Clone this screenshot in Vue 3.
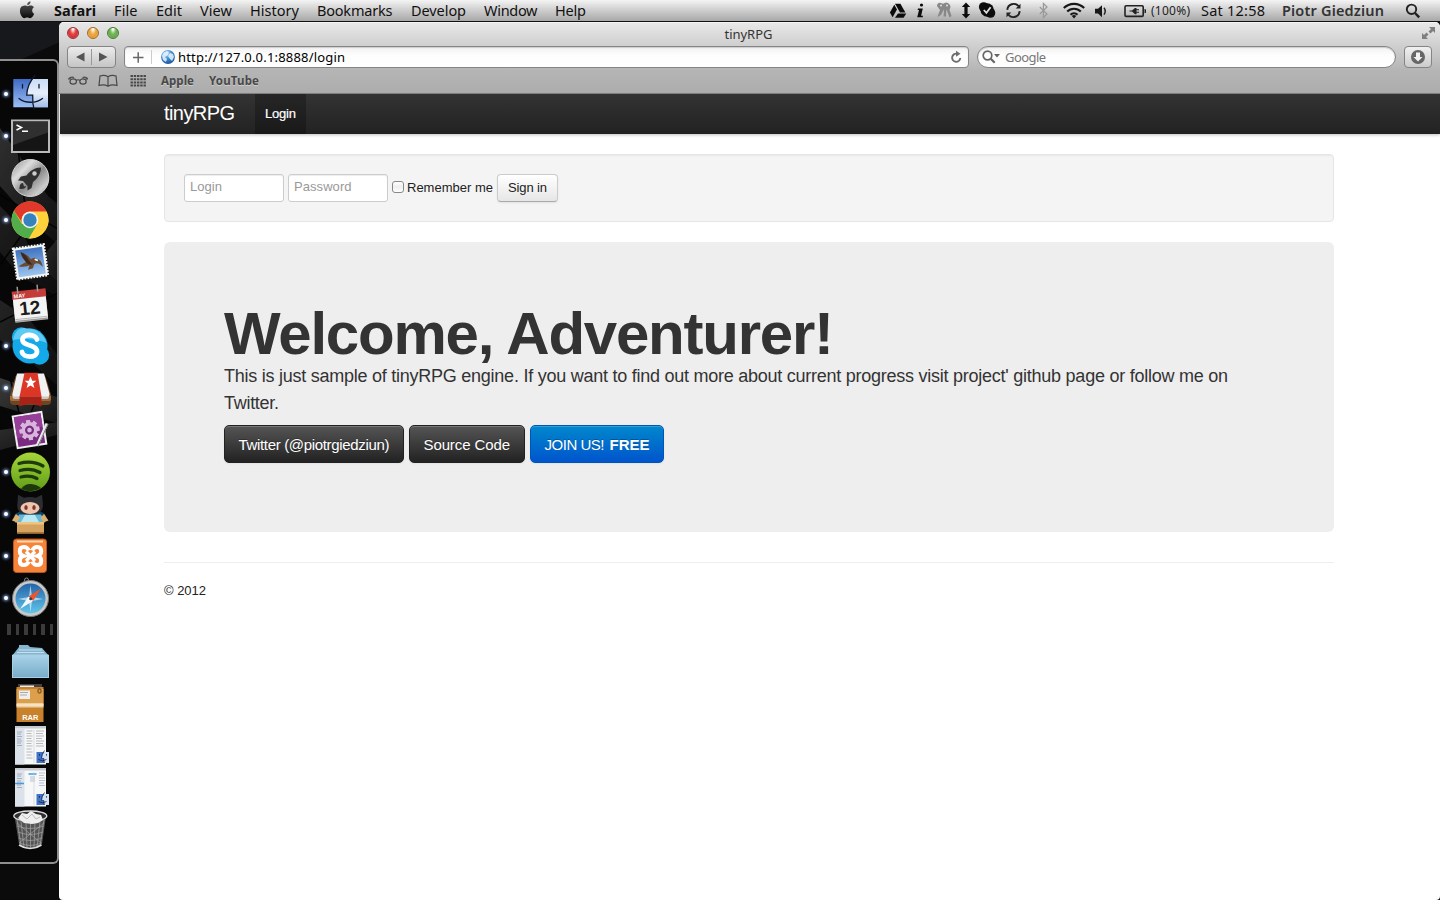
<script setup>
// Tracks a label out (or in) so that it spans the given width.
const vFit = {
  mounted(el, { value }) {
    const n = el.textContent.length
    const natural = el.getBoundingClientRect().width
    const ls = (value - natural) / Math.max(1, n - 1)
    el.style.letterSpacing = ls.toFixed(3) + 'px'
    el.style.marginRight = (-ls).toFixed(3) + 'px'
  },
}

const menus = [
  { t: 'Safari', w: 42, s: 60, b: true },
  { t: 'File', w: 23.5, s: 42 },
  { t: 'Edit', w: 26, s: 44 },
  { t: 'View', w: 32, s: 50 },
  { t: 'History', w: 49, s: 67 },
  { t: 'Bookmarks', w: 75.5, s: 94 },
  { t: 'Develop', w: 55, s: 73 },
  { t: 'Window', w: 53.5, s: 71 },
  { t: 'Help', w: 31, s: 50 },
]
const teeth = [0, 45, 90, 135, 180, 225, 270, 315]
</script>

<template>
  <div class="desktop">
    <header class="menubar">
      <svg class="apple" width="16" height="18" viewBox="0 0 16 18">
        <defs><linearGradient id="ap" x1="0" y1="0" x2="0" y2="1"><stop offset="0" stop-color="#555" /><stop offset=".5" stop-color="#333" /><stop offset="1" stop-color="#080808" /></linearGradient></defs>
        <path fill="url(#ap)" d="M8.2 4.3C8 2.300 9.600.600 11.500.3c.2 2-1.300 3.900-3.300 4zM13.200 9.400c0-1.600.8-2.500 1.800-3.200-.8-1.100-2-1.600-3.300-1.600-1.400 0-2.300.7-3 .7-.8 0-1.800-.7-3-.7C2.900 4.700.9 6.400.9 9.700c0 3.500 2.400 7.500 4.400 7.500 1 0 1.600-.7 2.900-.7 1.200 0 1.700.7 2.800.7 1.800 0 3.500-2.600 4.200-4.500-1.300-.6-2-1.800-2-3.300z" />
      </svg>
      <nav class="menus">
        <div v-for="m in menus" :key="m.t" class="menu" :style="{ width: m.s + 'px' }"><span v-fit="m.w" :class="{ strong: m.b }">{{ m.t }}</span></div>
      </nav>
      <svg class="status" width="265" height="21" viewBox="885 0 265 21">
        <g fill="#0c0c0c">
          <path d="M895 3.800h5.400l5 8.600h-5.400z" /><path d="M894.300 4.800l2.700 4.700-4.400 7.700-2.700-4.700z" /><path d="M898 13.500h8.300l-2.700 4.300h-8.600z" />
          <circle cx="921.500" cy="5" r="1.600" /><path d="M918 8.500h4.800l-1.700 7.300h1.900l-.4 1.500h-5.400l1.800-7.300h-1.400z" />
          <path d="M966 2.500l4.200 4.500h-2.600v7h2.600l-4.200 4.500-4.200-4.500h2.600V7h-2.600z" />
          <circle cx="983.700" cy="7" r="4.800" /><circle cx="990.500" cy="13" r="4.800" /><circle cx="987.200" cy="10" r="6.700" />
        </g>
        <path d="M983.800 10l2.600 2.800 4.200-5.600" fill="none" stroke="#ddd" stroke-width="1.800" />
        <g fill="#888" stroke="none"><path d="M937 6q0-3 3-3.200l3 1 3-1.300q4 .5 4.500 4.500l-1 3 2 6-2 1.500-3-8-.5 7h-2.500l.5-7-3 5.500-3.500 2 2.500-7z" /></g><circle cx="941" cy="5.500" r="1" fill="#ddd" /><circle cx="947" cy="5.500" r="1" fill="#ddd" />
        <g fill="none" stroke="#222" stroke-width="1.900"><path d="M1007.300 9.800a6.400 6.400 0 0 1 11.200-3.700M1019.700 11.200a6.400 6.400 0 0 1-11.200 3.700" /></g>
        <path fill="#222" d="M1020.500 3.700v4.800h-4.800zM1006.500 17.300v-4.800h4.800z" />
        <path d="M1039.800 7l7.200 7-3.600 3.500v-14l3.600 3.500-7.200 7" fill="none" stroke="#999" stroke-width="1.200" />
        <g fill="none" stroke="#181818" stroke-width="2.100"><path d="M1063.800 8.100a14.400 14.400 0 0 1 20.400 0" /><path d="M1067.200 11.500a9.600 9.600 0 0 1 13.600 0" /><path d="M1070.500 14.800a5 5 0 0 1 7 0" /></g>
        <path fill="#181818" d="M1071.800 15.900q2.200-1.600 4.400 0L1074 18.500z" />
        <path fill="#181818" d="M1095 8.800h3l4-3.600v12l-4-3.600h-3z" /><path d="M1104 7.800q2.500 3.400 0 6.800" fill="none" stroke="#222" stroke-width="1.500" />
        <path d="M1142 5.800h-15.800q-1.200 0-1.200 1.200v8.200q0 1.200 1.200 1.200H1142q1.200 0 1.200-1.200V7q0-1.200-1.200-1.200z" fill="none" stroke="#222" stroke-width="1.600" />
        <path fill="#222" d="M1144.500 9l1.500.4v3.400l-1.500.4zM1129.500 10.500h2.500l3-2.600h1.500v1.400h2.500v1h-2.500v1.400h2.500v1h-2.500v1.500H1135l-3-2.600h-2.500z" />
      </svg>
      <div class="battery"><span v-fit="39">(100%)</span></div>
      <div class="clock"><span v-fit="64">Sat 12:58</span></div>
      <div class="user"><span v-fit="102">Piotr Giedziun</span></div>
      <svg class="spot" width="16" height="16" viewBox="0 0 16 16"><circle cx="6.500" cy="6.300" r="4.700" fill="none" stroke="#222" stroke-width="1.900" /><path d="M10 10l4.200 4.300" stroke="#222" stroke-width="2.500" /></svg>
    </header>

    <div class="workspace">
      <aside class="side">
        <svg class="wallpaper" width="60" height="878" viewBox="0 22 60 878">
          <defs><linearGradient id="wl" x1="0" y1="0" x2="1" y2="1"><stop offset="0" stop-color="#888" /><stop offset="1" stop-color="#2a2a2a" /></linearGradient></defs>
          <path fill="#0b0b0c" d="M0 22h60v878H0z" /><path fill="#17181b" d="M0 22h60v20L22 59H0z" />
          <g fill="url(#wl)" opacity=".65"><path d="M0 128l18 26 30 42 12 10v40L32 222 0 186z" opacity=".7" /><path d="M0 206l20 20 14 32L60 282v16l-40-22-20-24z" opacity=".4" /><path d="M60 236v48L38 262z" opacity=".7" /><path d="M0 300l30 20 30 38v30L22 354 0 340z" opacity=".5" /><path d="M0 378l60 20v26L0 406z" opacity=".9" /><path d="M0 430l60-8v12L0 450z" opacity=".7" /></g>
          <path d="M0 195l60 35M18 150l8 64M0 265l40-55M0 322l60-30M10 378l12 46M40 390l-12 30" stroke="#050505" stroke-width="1.500" />
        </svg>
        <div class="dock">
          <div class="tile on"><svg viewBox="0 0 40 40">
            <defs><linearGradient id="fd" x1="0" y1="0" x2="0" y2="1"><stop offset="0" stop-color="#3f6ac4" /><stop offset="1" stop-color="#9dbff4" /></linearGradient><linearGradient id="fl" x1="0" y1="0" x2="0" y2="1"><stop offset="0" stop-color="#c9dcf5" /><stop offset=".5" stop-color="#e6eefb" /><stop offset="1" stop-color="#a2bee9" /></linearGradient></defs>
            <path fill="url(#fd)" d="M3.300 5H38v28.300H3.300z" /><path fill="url(#fl)" d="M23 5h15v28.300H23.700c-.5-3-1-6-.8-12h-6C17 16 19 9 23 5z" />
            <path d="M25 1.500C19 8 17 15 16.700 21.200h6c-.2 5 0 9 1.300 14M9 24.500c6 5 17 5 23.500 0M12.500 10.500V14M29 10.500V14" fill="none" stroke="#111a2b" stroke-width="1.300" stroke-linecap="round" />
          </svg></div>
          <div class="tile on"><svg viewBox="0 0 40 40">
            <path d="M2 4.500h37v31.500H2z" fill="#151515" stroke="#b9b9b9" stroke-width="2" /><path d="M3 5.500h35v11L3 29z" fill="#303030" /><path d="M6.500 9l5 2.500-5 2.500M12 15.300h6" fill="none" stroke="#fff" stroke-width="1.500" />
          </svg></div>
          <div class="tile"><svg viewBox="0 0 40 40">
            <defs><linearGradient id="lp" x1="0" y1="0" x2="1" y2="1"><stop offset="0" stop-color="#888" /><stop offset=".3" stop-color="#ddd" /><stop offset=".55" stop-color="#8b8b8b" /><stop offset=".8" stop-color="#ccc" /><stop offset="1" stop-color="#777" /></linearGradient></defs>
            <circle cx="20.300" cy="20" r="18.500" fill="url(#lp)" stroke="#d8d8d8" />
            <path fill="#303030" d="M31 9.500c-6 0-11 3-14.500 8l-5.500 1-3 4 5 .5 4.500 5 0 4.500 4-2.500 1.500-6C28 20.500 31 15 31 9.500zM13 25c-3 0-3.500 3-3.500 6 3 0 6 0 6.500-3l-2 .5z" /><circle cx="24.500" cy="15.500" r="2.200" fill="#ccc" />
          </svg></div>
          <div class="tile on"><svg viewBox="0 0 40 40">
            <circle cx="20" cy="20" r="18.500" fill="#ffd23b" /><path fill="#51ad4c" d="M4 10.800a18.500 18.500 0 0 0 15 27.600l8.300-14.200L12 24z" /><path fill="#ffd23b" d="M36.500 11.500H20l7.500 12.700L19 38.400A18.500 18.500 0 0 0 36.500 11.500z" /><path d="M4 10.800A18.500 18.500 0 0 1 36.500 11.500H20a8.500 8.500 0 0 0-8 11z" fill="#e0392b" />
            <circle cx="20" cy="20" r="8.300" fill="#f4f4f4" /><circle cx="20" cy="20" r="6.700" fill="#3682bd" />
          </svg></div>
          <div class="tile"><svg viewBox="0 0 40 40">
            <defs><linearGradient id="ml" x1="0" y1="0" x2="0" y2="1"><stop offset="0" stop-color="#3f73bf" /><stop offset="1" stop-color="#9bc4ee" /></linearGradient></defs>
            <g transform="rotate(-8 20 20)"><path d="M5 4.500h31v31H5z" fill="#f5f5f5" stroke="#f5f5f5" stroke-width="2.400" stroke-dasharray="1.800 1.200" /><path fill="url(#ml)" d="M7 6.500h27v27H7z" /><path fill="#6a4a30" d="M12 9c3 1 7 4 9 8l4-.5 3 2c2 0 4 3 4 8-3-4-5-5-8-4l-2 4-5 1 2-4c-6 1-8 0-11-1l8-3c-2-3-4-6-4-10.500z" /><path fill="#3a291e" d="M12 9c3 1 6 5 7 9l3 5-4-1c-3-3-5-8-6-13z" /><path d="M25 18l3 1.500" stroke="#fff" stroke-width="1.600" /></g>
          </svg></div>
          <div class="tile"><svg viewBox="0 0 40 40">
            <g transform="rotate(-6 20 20)"><path fill="#bbb" d="M3.500 8h33v29h-33z" /><path fill="#f4f4f4" d="M3.500 13h33v22h-33z" /><path fill="#c43c3a" d="M3 6h34v8H3z" /><path d="M9 1.500v7M29 1.500v7" stroke="#999" stroke-width="1.500" /><text x="4.500" y="12.800" font-size="5.500" font-weight="700" fill="#fff">MAY</text><text x="19.500" y="30.500" font-size="19" font-weight="700" text-anchor="middle" fill="#1b1b1b">12</text><path d="M4 34h32M4 36h32" stroke="#777" stroke-width=".5" /></g>
          </svg></div>
          <div class="tile on"><svg viewBox="0 0 40 40">
            <g fill="#14a9e8"><circle cx="20" cy="20" r="17.500" /><circle cx="11.500" cy="11" r="9.700" /><circle cx="29.500" cy="29" r="9.700" /></g><path d="M3 14C5 3 12 1 16 2.500c9-1 18 5 20.500 14.500-8-4-24-5-33.500-3z" fill="#5ccaf5" />
            <path d="M27 13.500c-1-5.500-14-6.500-14.500 0-.5 7 14.500 4.500 14.500 12 0 7-14 6.500-15 .5" fill="none" stroke="#fff" stroke-width="4.800" stroke-linecap="round" />
          </svg></div>
          <div class="tile on"><svg viewBox="0 0 40 40">
            <path fill="#6f4423" d="M5 10q0-3 3-3h24q3 0 4 3l5 17v6q0 4-4 4H4q-4 0-4-4v-6z" /><path fill="#a56c38" d="M0 28h41v3q0 2-3 2H3q-3 0-3-2z" /><path fill="#c9c9c9" d="M2.500 26h36.500v3q0 2-3 2H5q-2.500 0-2.500-2z" /><path fill="#f1f1f1" d="M7 5.500h27l5.500 20q.5 3-2 3H4.500q-2.500 0-2-3z" /><path fill="#dc3627" d="M14.500 4.700h13l4 24h-22z" /><path fill="#a92218" d="M9.500 28.500h22v10l-6-2-5-1-5 1-6 2z" /><path fill="#fff" d="M20.500 8.500l1.700 4.200h4.100l-3.200 2.900 1.300 4.400-3.900-2.600-3.900 2.600 1.300-4.400-3.200-2.900h4.100z" />
          </svg></div>
          <div class="tile"><svg viewBox="0 0 40 40">
            <g transform="rotate(-9 20 20)"><path d="M5 4h29v32H5z" fill="#7a2a80" stroke="#eee" stroke-width="2" /><path fill="#963f99" d="M6 5h27v13L6 27z" /><g fill="#d7b5dc"><rect v-for="a in teeth" :key="a" x="17.500" y="10" width="4" height="20" :transform="`rotate(${a} 19.500 20)`" /><circle cx="19.500" cy="20" r="8" /></g><circle cx="19.500" cy="20" r="4.500" fill="#7a2a80" /><circle cx="19.500" cy="20" r="2.300" fill="#d7b5dc" /></g><path d="M37 13.500L27 36" stroke="#e8e8e8" stroke-width="3" /><path d="M38 14L28 36" stroke="#777" />
          </svg></div>
          <div class="tile on"><svg viewBox="0 0 40 40">
            <defs><linearGradient id="sp" x1="0" y1="0" x2="0" y2="1"><stop offset="0" stop-color="#a6d53a" /><stop offset="1" stop-color="#5e9d17" /></linearGradient></defs>
            <circle cx="20.500" cy="20" r="19.500" fill="url(#sp)" /><path d="M9 11.500c9-2.500 17-1.500 24 2.500M10 18.500c7-2 14-1.500 20 2M11 25c6-1.500 11-1 16 1.500" fill="none" stroke="#1e3b0b" stroke-width="3.200" stroke-linecap="round" /><path d="M11 37q4-5.500 10-5t10 4q-9 6-20 1z" fill="#1d380c" />
          </svg></div>
          <div class="tile on"><svg viewBox="0 0 40 40">
            <ellipse cx="20" cy="23" rx="16" ry="7" fill="#155d85" opacity=".7" /><path fill="#2b2d31" d="M8 .8l6 3q6-1.500 12 0l6-3 .8 8c1 9-4 12-13 12S6 17 7.500 9z" /><ellipse cx="20" cy="14" rx="9.500" ry="6" fill="#efc5ad" /><ellipse cx="16" cy="13.500" rx="1.700" ry="2.600" fill="#7b3a2e" /><ellipse cx="24" cy="13.500" rx="1.700" ry="2.600" fill="#7b3a2e" /><path fill="#66b7d8" d="M9 20.500h22l4 8H5z" /><path fill="#b9e8f5" d="M15 21h10l4 7H11z" />
            <path fill="#d6a260" d="M7 28h27v11.500H7z" /><path fill="#f0c37f" d="M7 28h27v2.500H7z" /><path fill="#dfb06d" d="M6 20l-4 6.500 5 2 3-5zM34 20l4.500 6.500-5 2-3-5z" /><path fill="#a97637" d="M7 38h27v1.500H7z" />
          </svg></div>
          <div class="tile on"><svg viewBox="0 0 40 40">
            <rect x="3.500" y="3" width="33" height="33.500" rx="3" fill="#f5833a" stroke="#b95516" /><path d="M7 5.500h26" stroke="#ffd3ae" stroke-width="2" /><path fill="#fff" d="M17 19h7v2.500h-7z" />
            <g fill="none" stroke="#fff" stroke-width="4"><path d="M18.800 14.500q-1.500-3.500-5-3.500-4 0-4 4.300 0 3.500 3.500 4.700-3.500 1-3.500 4.700 0 4.300 4 4.300 3.500 0 5-3.500M22.200 14.500q1.500-3.500 5-3.500 4 0 4 4.300 0 3.500-3.500 4.700 3.500 1 3.500 4.700 0 4.300-4 4.300-3.500 0-5-3.500" /><path d="M16 15.500l9 9.500M25 15.500L16 25" stroke-width="3.300" /></g>
          </svg></div>
          <div class="tile on"><svg viewBox="0 0 40 40">
            <defs><linearGradient id="sf" x1="0" y1="0" x2="0" y2="1"><stop offset="0" stop-color="#225ea4" /><stop offset="1" stop-color="#64cbee" /></linearGradient></defs>
            <circle cx="16.500" cy="2" r="2" fill="none" stroke="#888" /><circle cx="20.500" cy="20.500" r="16.500" fill="url(#sf)" stroke="#c9c9c9" stroke-width="3" /><circle cx="20.500" cy="20.500" r="18" fill="none" stroke="#777" /><path fill="#eaf7ff" opacity=".65" d="M20.500 7l1.500 12 11 2-11 2-1.500 11-1.500-11-11-2 11-2z" /><path fill="#f0552a" d="M31 10.500l-8 12.500-4.500-4.500z" /><path fill="#f5f8fa" d="M10 31l8.500-12.500L23 23z" /><circle cx="20.700" cy="20.700" r="1.500" fill="#345" />
          </svg></div>
          <div class="divider"><i v-for="n in 6" :key="n" /></div>
          <div class="tile"><svg viewBox="0 0 40 40">
            <defs><linearGradient id="fo" x1="0" y1="0" x2="0" y2="1"><stop offset="0" stop-color="#a9d3e8" /><stop offset="1" stop-color="#78acc9" /></linearGradient></defs>
            <path fill="#86b5cf" d="M2 15l7-9V4h9l2 2 12 1 7 8v22H2z" /><path d="M9 9h23M7 11.500h27" stroke="#c5e0ed" /><path d="M2.500 14h36v22.500h-36z" fill="url(#fo)" stroke="#a8cfe3" />
          </svg></div>
          <div class="tile"><svg viewBox="0 0 40 40">
            <path fill="#424244" d="M8 1h24v6H8z" /><path fill="#eee" d="M10 2.500h14V7H10z" /><path fill="#c9822c" d="M6.500 4h27v35h-27z" /><path fill="#dca04c" d="M6.500 6h27v14h-27z" /><path fill="#edd0a0" d="M6.500 20h27v4.500h-27z" /><path d="M6.500 22h27" stroke="#f8e8cc" stroke-width="1.500" /><path fill="#eee" d="M9 7.500h11V16H9z" /><path d="M10 9.500h8M10 12h7" stroke="#aaa" /><rect x="28" y="6" width="3" height="4" rx="1" fill="none" stroke="#664016" /><text x="20.300" y="36.500" font-size="7.500" font-weight="700" text-anchor="middle" fill="#fff">RAR</text>
          </svg></div>
          <div v-for="k in 2" :key="k" class="tile"><svg viewBox="0 0 40 40">
            <path fill="#f6f7f8" d="M5 1h31v38.500H5z" /><path fill="#c7cbd0" d="M5 1h31v2.500H5z" /><path fill="#dbe2ea" d="M5 3.500h9.500v36H5z" />
            <path d="M7 7h5M7 9h4M7 11.500h5M7 14h4M7 16h5M7 18h4M7 20.500h5" stroke="#94a2b4" stroke-width=".8" />
            <path v-if="k === 1" d="M16.500 6h6M16.500 8.500h5M16.500 11h6M16.500 13.500h5M16.500 16h6M16.500 18.500h5M16.500 21h6M16.500 24h5M16.500 27h6M16.500 30h5M16.500 33h6M26 6h8M26 8.500h7M26 11h8M26 13.500h6M26 16h8M26 18.500h7M26 21h8" stroke="#aaa" stroke-width=".8" />
            <g v-else><path d="M5 16.500h9M18.500 7h8" stroke="#459be0" stroke-width="1.400" /><path d="M20 10h5M20 12h5M20 14h5M29 6h6M29 8.500h5M29 11h6M29 13.500h6M29 16h5M29 18.500h6" stroke="#aab4c4" stroke-width=".8" /></g>
            <path d="M24 5v33" stroke="#ccc" stroke-width=".6" /><path fill="#3f74c8" d="M26.500 27H39v11H26.500z" /><path fill="#d3e2f6" d="M34 27h5v11h-4.700l-.5-4h-2.300q.2-4 2.500-7z" /><path d="M34.500 25.500q-3 4-3 8h2.300l.5 4.500M28.500 34.500q4 2.500 8 0M29.500 29v1.700M36.500 29v1.700" fill="none" stroke="#112" stroke-width=".7" />
          </svg></div>
          <div class="tile"><svg viewBox="0 0 40 40">
            <path fill="#555" d="M4.500 7h31.500l-4 28q-2 5-11.500 5T9 35z" /><path d="M7 10l4 27M11 12l3 27M16 13l1 26M20.500 13v27M25 13l-1 26M30 12l-3 27M34 10l-4 27M7 17q13 5 27 0M8 23q12 5 25 0M8.500 29q12 5 23.500 0M9.500 34q11 5 22 0M7 14l24 20M34 14L9 34" fill="none" stroke="#a3a3a3" stroke-width=".7" /><ellipse cx="20.300" cy="7" rx="16.500" ry="5" fill="#303030" stroke="#ddd" stroke-width="1.300" /><path fill="#eee" d="M8 9l4-5 5 1 4-3 5 3 5 1 2 5-5 3-6 1-8-1z" /><path d="M12 6l5 4 5-5 4 5 4-2" fill="none" stroke="#bbb" /><path d="M9 36q11 7 22.500 0" fill="none" stroke="#ddd" stroke-width="1.500" />
          </svg></div>
        </div>
      </aside>

      <main class="window">
        <div class="chrome">
          <div class="titlebar">
            <div class="lights"><i class="red" /><i class="amber" /><i class="green" /></div>
            <span v-fit="48" class="title">tinyRPG</span>
            <svg class="full" width="14" height="14" viewBox="0 0 14 14"><path fill="#7f7f7f" d="M7 1h6v6l-2-2-2.500 2.500-2-2L9 3zM0 7l2 2 2.500-2.500 2 2L4 11l2 2H0z" /></svg>
          </div>
          <div class="toolbar">
            <div class="history">
              <svg width="47" height="20" viewBox="0 0 47 20"><path fill="#555" d="M16.500 5.500v9L8 10zM31 5.500v9l8.500-4.500z" /><path d="M23.500 2v16" stroke="#999" /></svg>
            </div>
            <div class="address">
              <svg width="53" height="20" viewBox="0 0 53 20">
                <defs><radialGradient id="gl" cx=".4" cy=".25" r=".8"><stop offset="0" stop-color="#a9d8f8" /><stop offset=".5" stop-color="#3d88cf" /><stop offset="1" stop-color="#174f96" /></radialGradient></defs>
                <path d="M8 10.500h10.500M13.200 5.300v10.500" stroke="#666" stroke-width="1.500" /><path d="M26.500 3v14" stroke="#ccc" />
                <circle cx="43" cy="10" r="6.900" fill="url(#gl)" /><path fill="#e8f5fd" opacity=".85" d="M38 6l4-2 2 1-1 3-3 2 2 2-1 3-3-2-1-4zM45 6l3 1 1 3-2 4-2-2-2-3z" />
              </svg>
              <span v-fit="167" class="url">http://127.0.0.1:8888/login</span>
              <svg class="reload" width="14" height="14" viewBox="0 0 14 14"><path d="M8 3.700A4.100 4.100 0 1 0 11.300 8" fill="none" stroke="#6e6e6e" stroke-width="1.900" /><path fill="#6e6e6e" d="M7 .8l4.500 3-4.500 3z" /></svg>
            </div>
            <div class="search">
              <svg width="20" height="16" viewBox="0 0 20 16"><circle cx="6.500" cy="6.500" r="4.300" fill="none" stroke="#666" stroke-width="1.700" /><path d="M9.700 9.800l4 4" stroke="#666" stroke-width="2.200" /><path fill="#666" d="M13 5h6l-3 3.500z" /></svg>
              <span v-fit="41">Google</span>
            </div>
            <div class="download"><svg width="16" height="16" viewBox="0 0 16 16"><circle cx="8" cy="8" r="7" fill="#666" /><path fill="#f1f1f1" d="M6 3.500h4V8h2.500L8 12.500 3.500 8H6z" /></svg></div>
          </div>
          <div class="bookmarks">
            <svg width="79" height="15" viewBox="0 0 79 15" fill="none" stroke="#484848" stroke-width="1.200">
              <path d="M1 5.500q2-2 5-1M19.500 5.500q-2-2-5-1M0 6h3M17.500 6h2.500M8.300 7.500q2-1.500 3.700 0" /><ellipse cx="5.200" cy="8.500" rx="3.200" ry="2.700" /><ellipse cx="15" cy="8.500" rx="3.200" ry="2.700" />
              <path d="M40 3.800Q36.500 1.500 32 3L31 12.500q5-1.500 9 .7 4-2.200 9-.7L48 3Q43.500 1.500 40 3.800zV13" />
              <path d="M62.500 3h15.500M62.500 6.200h15.500M62.500 9.400h15.500M62.500 12.600h15.500" stroke-width="2" stroke-dasharray="2.400 .85" />
            </svg>
            <span v-fit="33" class="bm-apple">Apple</span><span v-fit="50">YouTube</span>
          </div>
        </div>

        <div class="page">
          <nav class="navbar"><a class="brand"><span v-fit="71">tinyRPG</span></a><a class="active"><span v-fit="31">Login</span></a></nav>
          <div class="container">
            <form class="well" @submit.prevent>
              <div class="input"><span v-fit="32">Login</span></div>
              <div class="input"><span v-fit="57.500">Password</span></div>
              <i class="check" />
              <span v-fit="86" class="remember">Remember me</span>
              <button class="btn"><span v-fit="39">Sign in</span></button>
            </form>
            <section class="hero">
              <h1><span v-fit="610">Welcome, Adventurer!</span></h1>
              <p><span v-fit="1004">This is just sample of tinyRPG engine. If you want to find out more about current progress visit project' github page or follow me on</span><br /><span v-fit="55">Twitter.</span></p>
              <div class="actions">
                <a class="big b1"><span v-fit="151">Twitter (@piotrgiedziun)</span></a>
                <a class="big b2"><span v-fit="86.500">Source Code</span></a>
                <a class="big b3"><span v-fit="60">JOIN US!</span><b v-fit="40">FREE</b></a>
              </div>
            </section>
            <hr />
            <footer><span v-fit="42">© 2012</span></footer>
          </div>
        </div>
      </main>
    </div>
  </div>
</template>

<style>
body { margin: 0; background: #000; overflow: hidden; }
</style>

<style scoped>
* { box-sizing: border-box; }
span, b { display: inline-block; white-space: pre; }
.desktop { width: 1440px; height: 900px; display: flex; flex-direction: column; overflow: hidden; font-family: "Noto Sans", "Open Sans", sans-serif; }
.menubar { height: 22px; flex: none; display: flex; align-items: center; background: linear-gradient(#f4f4f4, #d8d8d8 35%, #a8a8a8); border-bottom: 1px solid #111; color: #111; font-size: 14.500px; line-height: 21px; }
.apple { margin: -1px 0 0 19px; }
.menus { display: flex; margin-left: 19px; }
.menu { flex: none; }
.strong { font-weight: 700; }
.status { flex: none; margin-left: 280px; }
.battery { font-size: 12px; margin-left: 1px; width: 50px; color: #222; }
.clock { width: 81px; }
.user { width: 123px; font-weight: 600; color: #333; }
.workspace { flex: 1; display: flex; position: relative; background: #0b0b0c; }
.side { width: 59px; flex: none; }
.wallpaper { position: absolute; left: 0; top: 0; }
.dock { position: relative; margin-top: 37px; width: 59px; height: 805px; border: 2px solid #8f9090; border-left: 0; border-radius: 0 6px 6px 0; padding-top: 13px; display: flex; flex-direction: column; gap: 2px; background: rgba(0, 0, 0, .3); }
.tile { height: 40px; flex: none; padding-left: 10px; position: relative; }
.tile svg { width: 40px; height: 40px; display: block; overflow: visible; font-family: "Liberation Sans", sans-serif; }
.on::before { content: ""; position: absolute; left: 4px; top: 18px; width: 4px; height: 4px; border-radius: 50%; background: #fff; box-shadow: 0 0 3px 1px #7799d8; }
.divider { height: 19px; display: flex; gap: 5px; padding: 4px 0 4px 7px; }
.divider i { width: 3.500px; background: #3b3b3b; }
.window { flex: 1; position: relative; border-radius: 5px 5px 4px 4px; overflow: hidden; background: #fff; display: flex; flex-direction: column; }
.chrome { height: 72px; flex: none; background: linear-gradient(#e9e9e9, #d0d0d0 32%, #b5b5b5 68%, #adadad); border-bottom: 1px solid #858585; box-shadow: inset 0 1px #f5f5f5; }
.titlebar { height: 24px; position: relative; display: flex; align-items: center; justify-content: center; color: #333; font-size: 13px; line-height: 22px; padding-bottom: 1px; padding-right: 2px; }
.lights { position: absolute; left: 8px; top: 5px; display: flex; gap: 8px; }
.lights i { width: 12px; height: 12px; border-radius: 50%; border: 1px solid; }
.red { border-color: #8f3836 !important; background: radial-gradient(ellipse at 50% 10%, #fff 5%, #e94b49 40%, #d92f2f 65%, #ff9b98); }
.amber { border-color: #9f6b2b !important; background: radial-gradient(ellipse at 50% 10%, #fff 5%, #efad4a 40%, #e79c35 65%, #ffe58d); }
.green { border-color: #477b37 !important; background: radial-gradient(ellipse at 50% 10%, #fff 5%, #77b95b 40%, #64aa49 65%, #c2f09d); }
.full { position: absolute; right: 4px; top: 4px; }
.toolbar { height: 22px; display: flex; padding-left: 8px; }
.history { width: 49px; height: 22px; border: 1px solid #848484; border-radius: 4px; background: linear-gradient(#ececec, #c5c5c5); }
.address { margin-left: 8px; width: 845px; height: 22px; border: 1px solid #858585; border-radius: 4px; background: linear-gradient(#f1f1f1, #fdfdfd 40%, #fff); display: flex; align-items: center; box-shadow: inset 0 1px 1px #ccc; }
.address svg { flex: none; }
.url { font-size: 13px; line-height: 18px; color: #000; }
.reload { margin-left: auto; margin-right: 5px; }
.search { margin-left: 8px; width: 419px; height: 22px; border: 1px solid #858585; border-radius: 11px; background: linear-gradient(#f1f1f1, #fdfdfd 40%, #fff); display: flex; align-items: center; font-size: 13px; line-height: 18px; color: #777; padding-left: 3px; box-shadow: inset 0 1px 1px #ccc; }
.search span { margin-left: 4px; }
.download { margin-left: 8px; width: 28px; height: 22px; border: 1px solid #848484; border-radius: 4px; background: linear-gradient(#f0f0f0, #ccc); display: flex; align-items: center; justify-content: center; }
.bookmarks { height: 25px; display: flex; align-items: center; padding-left: 9px; font-size: 11.500px; font-weight: 700; line-height: 15px; color: #484848; text-shadow: 0 1px rgba(255, 255, 255, .4); }
.bm-apple { margin-left: 14px; }
.bookmarks span + span { margin-left: 15px; }
.page { flex: 1; font-family: "Liberation Sans", Arial, sans-serif; font-size: 13px; line-height: 18px; color: #333; }
.navbar { height: 40px; margin-left: 1px; background: linear-gradient(#333, #222); box-shadow: 0 1px 3px rgba(0, 0, 0, .25); display: flex; padding-left: 104px; }
.brand { color: #fff; font-size: 20px; line-height: 38px; width: 91px; }
.active { width: 51px; padding-left: 10px; line-height: 39px; color: #fff; background: rgba(0, 0, 0, .25); -webkit-text-stroke: .2px #fff; }
.container { width: 1170px; margin: 20px 0 0 105px; }
.well { height: 68px; padding: 19px 775px 19px 19px; border: 1px solid #e6e6e6; border-radius: 4px; background: #f4f4f4; box-shadow: inset 0 1px 1px rgba(0, 0, 0, .05); display: flex; }
.input { width: 100px; height: 28px; margin-right: 4px; padding: 3px 5px; border: 1px solid #ccc; border-radius: 3px; background: #fff; color: #999; box-shadow: inset 0 1px 1px rgba(0, 0, 0, .075); }
.check { width: 12px; height: 12px; margin-top: 7px; border: 1px solid #888; border-radius: 3px; background: linear-gradient(#fff, #eee 50%, #fff); }
.remember { margin-left: 3px; line-height: 28px; color: #222; }
.btn { margin-left: auto; width: 61px; height: 28px; padding: 0; border: 1px solid #ccc; border-bottom-color: #aaa; border-radius: 4px; background: linear-gradient(#fff, #e6e6e6); font: 13px/26px "Liberation Sans", Arial, sans-serif; color: #222; box-shadow: 0 1px 2px rgba(0, 0, 0, .08); }
.hero { margin-top: 20px; height: 290px; padding: 60px; border-radius: 6px; background: #eee; }
h1 { margin: 0; font-size: 60px; line-height: 64px; font-weight: 700; height: 61px; color: #333; }
p { margin: 0 0 8px; font-size: 18px; line-height: 27px; height: 54px; color: #333; }
.actions { display: flex; gap: 5px; }
.big { height: 38px; border-radius: 5px; border: 1px solid #222; color: #fff; font-size: 15px; line-height: 37px; padding-left: 13.500px; background: linear-gradient(#555, #222); box-shadow: inset 0 1px rgba(255, 255, 255, .2), 0 1px 2px rgba(0, 0, 0, .05); text-shadow: 0 -1px rgba(0, 0, 0, .25); }
.b1 { width: 180px; }
.b2 { width: 116px; }
.b3 { width: 134px; border-color: #05b; background: linear-gradient(#08c, #05c); }
.b3 b { margin-left: 5px; }
hr { margin: 30px 0 19px; border: 0; border-top: 1px solid #eee; }
footer { color: #222; }
</style>
